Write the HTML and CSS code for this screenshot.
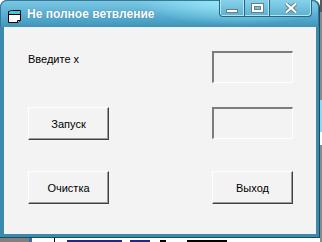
FILE: index.html
```html
<!DOCTYPE html>
<html lang="ru">
    <head>
        <meta charset="utf-8"/>
        <title>Не полное ветвление</title>
        <link rel="stylesheet" href="styles.css">
    </head>
    <body>
        <div class="window">
            <div class="titlebar">
                <svg class="appIcon" width="14" height="13" viewBox="0 0 14 13">
                    <path d="M0.5 1.5 L4.5 0.5 L12.5 0.5 L12.5 10.5 L9.5 12.5 L0.5 12.5 Z" fill="#ffffff" stroke="#000" stroke-width="1"/>
                    <path d="M1 2 L4.5 1 L12 1 L12 4 L1 4 Z" fill="#3cc8e8"/>
                    <path d="M0.5 4.5 L12.5 4.5" stroke="#000" stroke-width="1"/>
                    <path d="M9.5 12.5 L9.5 10.5 L12.5 10.5" fill="#c8c8c8" stroke="#000" stroke-width="1"/>
                </svg>
                <span class="caption">Не полное ветвление</span>
                <div class="captionButtons">
                    <div class="capBtn minBtn"><span class="minGlyph"></span></div>
                    <div class="capBtn maxBtn"><span class="maxGlyph"></span></div>
                    <div class="capBtn closeBtn">
                        <svg width="12" height="10" viewBox="0 0 12 10">
                            <path d="M1.5 1 L10.5 9 M10.5 1 L1.5 9" stroke="#6a7f88" stroke-width="4" stroke-linecap="square"/>
                            <path d="M1.5 1 L10.5 9 M10.5 1 L1.5 9" stroke="#ffffff" stroke-width="2" stroke-linecap="square"/>
                        </svg>
                    </div>
                </div>
            </div>
            <div class="client">
                <div class="label">Введите x</div>
                <div class="textbox"></div>
                <button class="btn">Запуск</button>
                <div class="textbox"></div>
                <button class="btn lowBtn">Очистка</button>
                <button class="btn lowBtn">Выход</button>
            </div>
        </div>
    </body>
</html>
```

FILE: styles.css
```css
*{margin:0;padding:0;box-sizing:border-box;}

body{
    width: 322px;
    height: 242px;
    overflow: hidden;
    background:
        linear-gradient(to right, transparent 0, transparent 67px, #1a2a8a 67px, #1a2a8a 122px, transparent 122px, transparent 130px, #1a2a8a 130px, #1a2a8a 150px, transparent 150px, transparent 160px, #000 160px, #000 166px, transparent 166px, transparent 187px, #000 187px, #000 227px, transparent 227px) 0 240px / 320px 2px no-repeat,
        linear-gradient(to right, #808080 0, #808080 29px, #3a6ea8 29px, #3a6ea8 32px, #ffffff 32px, #ffffff 54px, #000 54px, #000 55px, #ffffff 55px) 0 238px / 320px 4px no-repeat,
        linear-gradient(to bottom, #5a5a5a 0, #5a5a5a 12px, #8a8a8a 12px, #8a8a8a 100px, #8fd8f0 100px, #8fd8f0 132px, #ffffff 132px, #ffffff 145px, #8a8a8a 145px) 320px 0 / 2px 242px no-repeat,
        #ffffff;
    font-family: "Liberation Sans", Arial, sans-serif;
}

.window{
    width: 320px;
    height: 238px;
    display: flex;
    flex-direction: column;
    background: #3a8aab;
    border-radius: 7px 7px 0 0;
    border-right: 1px solid #1d4a5c;
    border-bottom: 1px solid #1d4a5c;
}

.titlebar{
    height: 27px;
    display: flex;
    align-items: flex-start;
    border-radius: 7px 7px 0 0;
    background:
        radial-gradient(ellipse 100px 24px at 235px 0, rgba(160,240,255,0.9), rgba(160,240,255,0) 100%),
        linear-gradient(to bottom, #7cc6e2 0%, #60b4d6 40%, #50a6ca 70%, #4094b8 100%);
    border: 1px solid #34789a;
    border-bottom: none;
}

.appIcon{
    margin: 9px 0 0 7px;
}

.caption{
    margin: 6px 0 0 5px;
    font-size: 12px;
    font-weight: bold;
    color: #ffffff;
    text-shadow: 0 0 1px #2e7090;
}

.captionButtons{
    display: flex;
    margin-left: auto;
    margin-right: 6px;
    height: 17px;
    margin-top: -1px;
    border: 1px solid #2c6580;
    border-top: none;
    border-radius: 0 0 4px 4px;
    background: linear-gradient(to bottom, #86d2ec, #5eb0d0);
    box-shadow: inset 1px 0 0 #b0e6f4, inset -1px -1px 0 #b0e6f4;
}

.capBtn{
    display: flex;
    align-items: center;
    justify-content: center;
    height: 16px;
    border-right: 1px solid #2c6580;
    box-shadow: inset -1px 0 0 #b0e6f4;
}

.minBtn{width: 25px;}
.maxBtn{width: 25px;}
.closeBtn{width: 41px; border-right: none; box-shadow: none;}

.minGlyph{
    width: 12px;
    height: 4px;
    margin-top: 6px;
    background: #ffffff;
    border: 1px solid #6a7f88;
}

.maxGlyph{
    width: 11px;
    height: 8px;
    border: 2px solid #ffffff;
    outline: 1px solid #6a7f88;
    box-shadow: inset 0 0 0 1px #6a7f88;
}

.client{
    flex: 1;
    margin: 0 3px 3px 4px;
    background: #f3f3f3;
    display: grid;
    grid-template-columns: 81px 81px;
    grid-template-rows: 32px 33px 32px;
    column-gap: 103px;
    row-gap: 24px;
    padding: 24px 0 0 24px;
    align-content: start;
}

.lowBtn{
    margin-top: 7px;
}

.label{
    font-size: 11px;
    color: #000;
    padding-top: 2px;
}

.textbox{
    background: #f3f3f3;
    border-top: 2px solid #7c7c7c;
    border-left: 2px solid #7c7c7c;
    border-right: 1px solid #ffffff;
    border-bottom: 1px solid #ffffff;
    height: 32px;
}

.btn{
    font-family: "Liberation Sans", Arial, sans-serif;
    font-size: 11px;
    color: #000;
    background: #f3f3f3;
    border-top: 1px solid #ffffff;
    border-left: 1px solid #ffffff;
    border-right: 1px solid #404040;
    border-bottom: 1px solid #404040;
    box-shadow: inset -1px -1px 0 #9a9a9a;
    height: 33px;
}
```
